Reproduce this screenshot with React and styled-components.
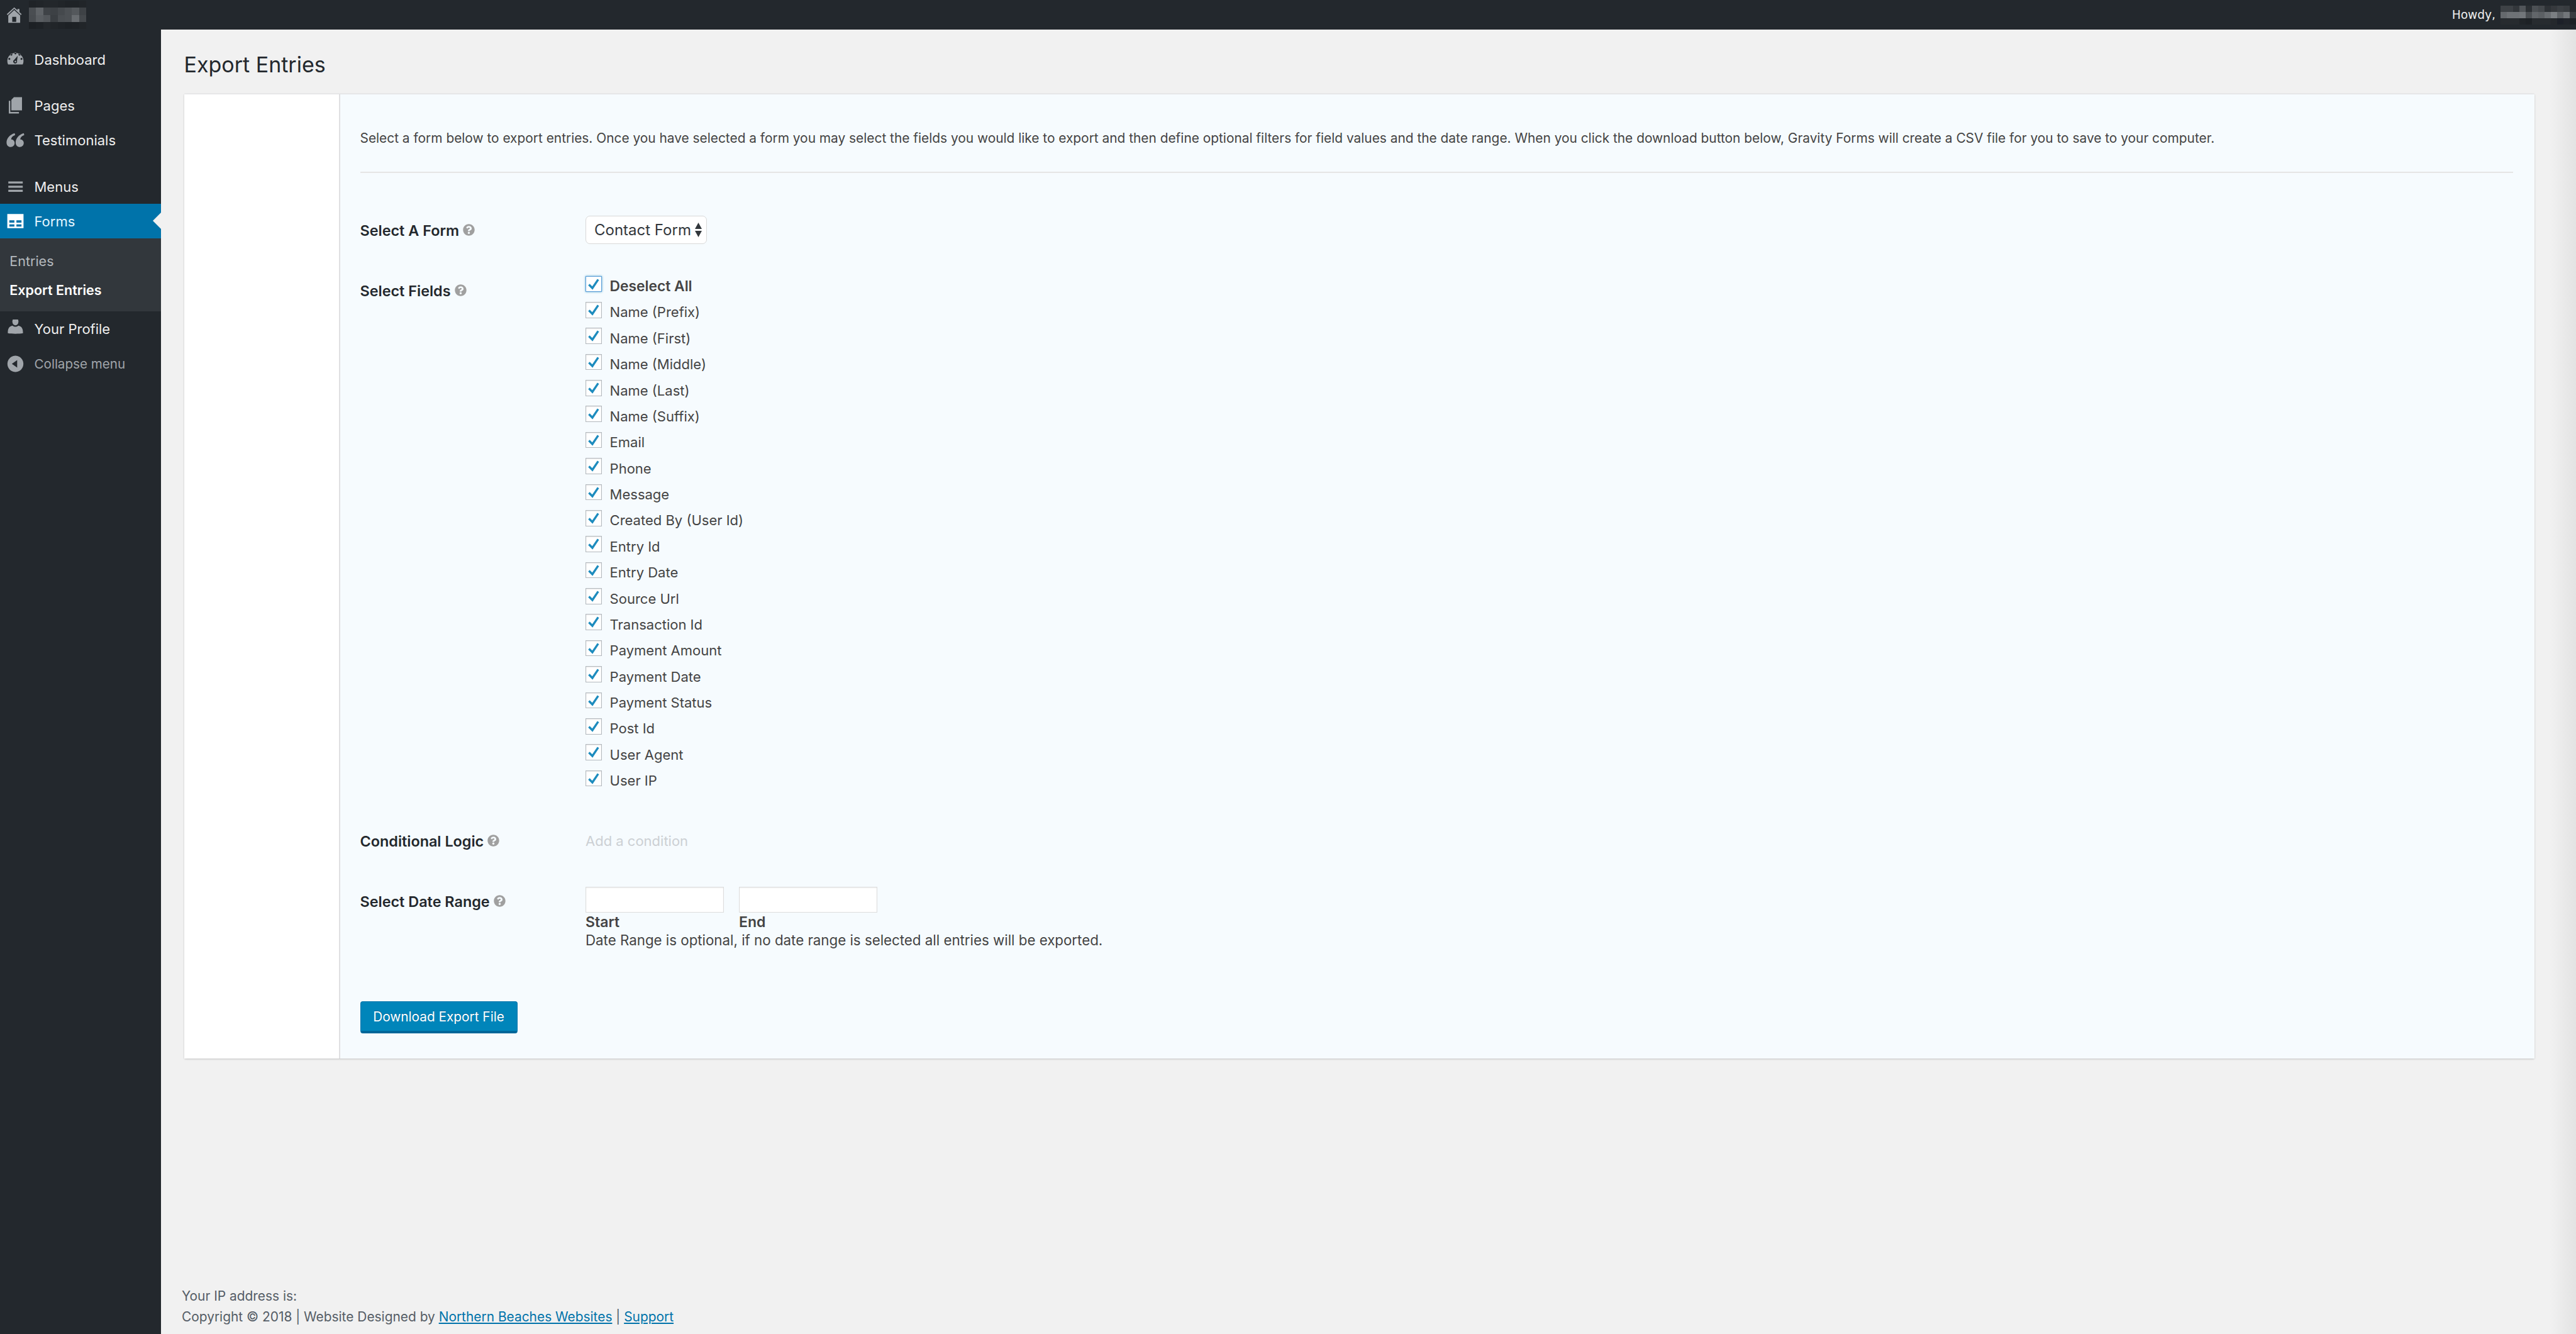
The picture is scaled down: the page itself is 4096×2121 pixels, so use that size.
import React from 'react'
import styled, { createGlobalStyle } from 'styled-components'
import { FaQuestionCircle } from 'react-icons/fa'

const GlobalStyle = createGlobalStyle`
  html, body {
    margin: 0;
    padding: 0;
    height: 100%;
    overflow: hidden;
    background: #f1f1f1;
  }
  #root {
    height: 100%;
  }
  * {
    box-sizing: border-box;
  }
`

const Page = styled.div`
  height: 100vh;
  display: flex;
  flex-direction: column;
  font-family: Inter, "Liberation Sans", sans-serif;
  font-size: 22px;
  color: #444;
`

const TopBar = styled.header`
  height: 47px;
  flex: none;
  background: #23282d;
  display: flex;
  align-items: center;
  justify-content: space-between;
`
const TopLeft = styled.div`
  display: flex;
  align-items: center;
  padding-left: 10px;
  gap: 9.6px;
`
const TopRight = styled.div`
  display: flex;
  align-items: center;
  gap: 8px;
`
const Howdy = styled.span`
  font-family: "DejaVu Sans", sans-serif;
  font-size: 18.6px;
  color: #eee;
`
const BlurSvg = styled.svg`
  display: block;
  shape-rendering: crispEdges;
`

const Body = styled.div`
  flex: 1;
  display: flex;
  min-height: 0;
`

const Sidebar = styled.nav`
  width: 256px;
  flex: none;
  background: #23282d;
  padding-top: 20px;
`
const MenuItem = styled.div`
  position: relative;
  height: 55px;
  margin-top: ${p => p.$gap || 0}px;
  display: flex;
  align-items: center;
  font-size: 22px;
  color: ${p => (p.$muted ? '#a0a5aa' : '#eee')};
  background: ${p => (p.$active ? '#0073aa' : 'transparent')};
  ${p => p.$active && 'color: #e4f6ff;'}
  ${p => p.$muted && 'font-size: 20.6px;'}

  &::after {
    content: ${p => (p.$active ? '""' : 'none')};
    position: absolute;
    right: 0;
    top: 14px;
    border-style: solid;
    border-width: 13px 13px 13px 0;
    border-color: transparent #f1f1f1 transparent transparent;
  }
`
const IconSlot = styled.span`
  width: 54.5px;
  flex: none;
  display: flex;
  justify-content: center;
  padding-right: 5.5px;
`
const MenuIcon = styled.svg`
  display: block;
  width: 29px;
  height: 29px;
  fill: ${p => (p.$active ? '#fff' : '#a0a5aa')};
`
const SubMenu = styled.div`
  height: 116px;
  background: #32373c;
  padding: 13px 0 0 15.3px;
  font-size: 21.5px;
`
const SubItem = styled.div`
  height: 46px;
  display: flex;
  align-items: center;
  color: ${p => (p.$current ? '#fff' : '#b4b9be')};
  font-weight: ${p => (p.$current ? 600 : 400)};
`

const Main = styled.main`
  flex: 1;
  min-width: 0;
  display: flex;
  flex-direction: column;
  background: linear-gradient(to right, #f1f1f1 calc(100% - 42px), #e3e3e3);
`
const Title = styled.h1`
  margin: 33px 0 23px 36.5px;
  font-size: 34px;
  line-height: 46px;
  font-weight: 400;
  color: #23282d;
`
const Panel = styled.section`
  margin: 0 66px 0 36.5px;
  height: 1534px;
  display: flex;
  background: #fff;
  border-top: 1.6px solid #e2e2e4;
  border-radius: 2px;
  box-shadow: 0 1px 3px rgba(0, 0, 0, 0.2);
`
const Aside = styled.div`
  width: 248px;
  flex: none;
  background: #fff;
  border-right: 2px solid #e0e0e2;
`
const Content = styled.div`
  flex: 1;
  min-width: 0;
  background: #f6fbfe;
  padding: 56px 34px 0 32px;
`
const Intro = styled.p`
  margin: 0;
  line-height: 28px;
  font-size: 20.86px;
  white-space: nowrap;
`
const Rule = styled.hr`
  margin: 39px 0 0;
  border: 0;
  height: 1.6px;
  background: #e5e5e5;
`
const FormRow = styled.div`
  display: grid;
  grid-template-columns: 358.5px 1fr;
  margin-top: ${p => p.$gap}px;
`
const RowLabel = styled.div`
  padding-top: 10px;
  display: flex;
  align-items: flex-start;
  gap: 6px;
  line-height: 28px;
  font-size: 23.4px;
  font-weight: 600;
  color: #23282d;
`
const Help = styled(FaQuestionCircle)`
  width: 19px;
  height: 19px;
  margin-top: 3px;
  color: #a0a0a0;
`
const SelectBox = styled.div`
  width: 193px;
  height: 45px;
  display: flex;
  align-items: center;
  justify-content: space-between;
  padding: 0 7px 0 13px;
  background: #fff;
  border: 1.6px solid #d8d8d8;
  border-radius: 7px;
  font-size: 24px;
  color: #32373c;
`
const Updown = styled.svg`
  width: 11px;
  height: 24px;
  fill: #32373c;
`
const FieldList = styled.div`
  display: flex;
  flex-direction: column;
`
const FieldRow = styled.div`
  height: 41.38px;
  display: flex;
  gap: 13px;
  color: #444;
  font-size: ${p => (p.$bold ? 22.8 : 22)}px;
  font-weight: ${p => (p.$bold ? 600 : 400)};
`
const CheckBox = styled.span`
  width: 25.6px;
  height: 25.6px;
  flex: none;
  background: #fff;
  border: 1.6px solid ${p => (p.$focus ? '#5b9dd9' : '#b4b9be')};
  box-shadow: ${p => (p.$focus ? '0 0 3px rgba(30, 140, 190, 0.8)' : 'inset 0 1px 2px rgba(0, 0, 0, 0.1)')};
`
const Check = styled.svg`
  display: block;
  width: 100%;
  height: 100%;
  fill: none;
  stroke: #1e8cbe;
  stroke-width: 4.6;
`
const FieldText = styled.span`
  line-height: 28px;
  padding-top: 2.5px;
`
const AddCondition = styled.div`
  padding-top: 9px;
  line-height: 28px;
  color: #ccd0d4;
`
const DateGrid = styled.div`
  display: grid;
  grid-template-columns: 220px 220px;
  column-gap: 24px;
`
const DateInput = styled.input`
  display: block;
  width: 100%;
  height: 41px;
  margin: 0;
  padding: 0;
  background: #fff;
  border: 1.6px solid #ddd;
  box-shadow: inset 0 1px 2px rgba(0, 0, 0, 0.07);
  outline: none;
`
const DateCaption = styled.div`
  margin-top: 1px;
  line-height: 28px;
  font-size: 23px;
  font-weight: 600;
`
const DateNote = styled.div`
  margin-top: 1.4px;
  line-height: 28px;
  font-size: 22.3px;
`
const DownloadButton = styled.button`
  display: block;
  width: 250px;
  height: 51px;
  margin-top: 83px;
  padding: 0;
  background: #0085ba;
  border: 1.6px solid #0073aa;
  border-bottom: 4px solid #006799;
  border-radius: 4px;
  color: #fff;
  font: inherit;
  font-size: 20.8px;
  text-shadow: 0 -1px 1px #006799;
`

const Footer = styled.footer`
  margin-top: auto;
  padding: 0 0 11px 33px;
  line-height: 32.5px;
  font-size: 20.9px;
  color: #555d66;
`
const FooterLink = styled.a`
  color: #0073aa;
  text-decoration: underline;
`

const leftBlur = [
  ['#1f2327', '#212529', '#23272b', '#23272b', '#212529', '#1f2327', '#1f2327', '#212529'],
  ['#4a4e52', '#5f6367', '#3f4347', '#3d4145', '#45494d', '#4c5054', '#54585c', '#3e4246'],
  ['#484c50', '#5a5e62', '#53575b', '#3a3e42', '#4a4e52', '#4c5054', '#686c70', '#44484c'],
  ['#1c2024', '#1e2226', '#23272b', '#212529', '#1f2327', '#1d2125', '#1e2226', '#212529'],
]
const rightBlur = [
  ['#3e4246', '#3e4246', '#33373b', '#515559', '#2c3034', '#4c5054', '#44484c', '#2e3236', '#36393d', '#3c4044', '#383c40', '#25292d'],
  ['#65696d', '#6e7276', '#6e7276', '#72767a', '#4b4f53', '#62666a', '#5c6064', '#696d71', '#7b7f83', '#5f6367', '#72767a', '#383c40'],
  ['#272b2f', '#272b2f', '#272b2f', '#202428', '#1d2125', '#272b2f', '#272b2f', '#272b2f', '#24282c', '#1c2028', '#20242a', '#1d2125'],
]

const PixelBlur = ({ rows, cell }) => (
  <BlurSvg
    width={rows[0].length * cell}
    height={rows.length * cell}
    viewBox={`0 0 ${rows[0].length} ${rows.length}`}
  >
    {rows.map((row, y) =>
      row.map((fill, x) => <rect key={`${x}-${y}`} x={x} y={y} width="1" height="1" fill={fill} />),
    )}
  </BlurSvg>
)

const HomeIcon = () => (
  <MenuIcon viewBox="12 10 33 33" style={{ width: 26, height: 26 }}>
    <path d="M13 24.500 28 11l6.500 5.800V14h4v6.400l4.500 4.100-1.700 1.900L28 13.800 14.700 26.400z" />
    <path fillRule="evenodd" d="M28 16.500 40 27.500V42H16V27.500zM24 30v10h8V30z" />
  </MenuIcon>
)
const GaugeIcon = () => (
  <MenuIcon viewBox="12 100 36 36">
    <path
      fillRule="evenodd"
      d="M15.600 128A16 16 0 1 1 44.400 128zM18 115a2 2 0 1 0 .01 0zM22 106.500a2 2 0 1 0 .01 0zM30 104a2 2 0 1 0 .01 0zM38 106.500a2 2 0 1 0 .01 0zM42 115a2 2 0 1 0 .01 0zM34.500 111l-7 8a3.800 3.800 0 1 0 5.600 2zM30 120.500a1.600 1.600 0 1 1-.01 0z"
    />
  </MenuIcon>
)
const PagesIcon = () => (
  <MenuIcon viewBox="11 188 36 36">
    <path d="M16 197h3v22h17v3H16z" />
    <path d="M26 190h16v26H21v-21z" />
  </MenuIcon>
)
const QuoteIcon = () => (
  <MenuIcon viewBox="10.500 254 36 36">
    <path d="M27 258.500C17 261.500 11 269 11 277c0 6 4 9 8 9 5 0 8-3.500 8-8 0-4.500-3.500-7-7-7 .3-3.500 3-7 8-8.500z" />
    <path d="M45 258.500c-10 3-16 10.500-16 18.500 0 6 4 9 8 9 5 0 8-3.500 8-8 0-4.500-3.500-7-7-7 .3-3.500 3-7 8-8.500z" />
  </MenuIcon>
)
const BarsIcon = () => (
  <MenuIcon viewBox="12 346 36 36">
    <path d="M16 354h28.500v4H16zM16 362.500h28.500v4H16zM16 370.500h28.500v4H16z" />
  </MenuIcon>
)
const TableIcon = () => (
  <MenuIcon $active viewBox="12 414 36 36">
    <path
      fillRule="evenodd"
      d="M14 418h32v28H14zM18 430.500v4.500h10v-4.500zM32 430.500v4.500h10v-4.500zM18 438.500v4.500h10v-4.500zM32 438.500v4.500h10v-4.500z"
    />
  </MenuIcon>
)
const UserIcon = () => (
  <MenuIcon viewBox="12 630 36 36">
    <ellipse cx="30" cy="634" rx="6" ry="7.500" />
    <path d="M15 657c0-9 2-13 9-15 3 3 9 3 12 0 7 2 9 6 9 15-8 1.500-22 1.500-30 0z" />
  </MenuIcon>
)
const CollapseIcon = () => (
  <MenuIcon viewBox="12 692 36 36">
    <path
      fillRule="evenodd"
      d="M30 694a15.800 16 0 1 0 .01 0zM33.500 702.500v15L23 710z"
    />
  </MenuIcon>
)

const fields = [
  'Name (Prefix)',
  'Name (First)',
  'Name (Middle)',
  'Name (Last)',
  'Name (Suffix)',
  'Email',
  'Phone',
  'Message',
  'Created By (User Id)',
  'Entry Id',
  'Entry Date',
  'Source Url',
  'Transaction Id',
  'Payment Amount',
  'Payment Date',
  'Payment Status',
  'Post Id',
  'User Agent',
  'User IP',
]

const Field = ({ label, bold, focus }) => (
  <FieldRow $bold={bold}>
    <CheckBox $focus={focus}>
      <Check viewBox="0 0 32 32">
        <polyline points="6,17 13.500,24.500 26,6" />
      </Check>
    </CheckBox>
    <FieldText>{label}</FieldText>
  </FieldRow>
)

const App = () => (
  <Page>
    <GlobalStyle />
    <TopBar>
      <TopLeft>
        <HomeIcon />
        <PixelBlur rows={leftBlur} cell={11.4} />
      </TopLeft>
      <TopRight>
        <Howdy>Howdy,</Howdy>
        <PixelBlur rows={rightBlur} cell={10} />
      </TopRight>
    </TopBar>
    <Body>
      <Sidebar>
        <MenuItem>
          <IconSlot><GaugeIcon /></IconSlot>Dashboard
        </MenuItem>
        <MenuItem $gap={18}>
          <IconSlot><PagesIcon /></IconSlot>Pages
        </MenuItem>
        <MenuItem>
          <IconSlot><QuoteIcon /></IconSlot>Testimonials
        </MenuItem>
        <MenuItem $gap={19}>
          <IconSlot><BarsIcon /></IconSlot>Menus
        </MenuItem>
        <MenuItem $active>
          <IconSlot><TableIcon /></IconSlot>Forms
        </MenuItem>
        <SubMenu>
          <SubItem>Entries</SubItem>
          <SubItem $current>Export Entries</SubItem>
        </SubMenu>
        <MenuItem>
          <IconSlot><UserIcon /></IconSlot>Your Profile
        </MenuItem>
        <MenuItem $muted $gap={1}>
          <IconSlot><CollapseIcon /></IconSlot>Collapse menu
        </MenuItem>
      </Sidebar>
      <Main>
        <Title>Export Entries</Title>
        <Panel>
          <Aside />
          <Content>
            <Intro>
              Select a form below to export entries. Once you have selected a form you may select the fields you would like to export and then define optional filters for field values and the date range. When you click the download button below, Gravity Forms will create a CSV file for you to save to your computer.
            </Intro>
            <Rule />
            <FormRow $gap={68}>
              <RowLabel>Select A Form <Help /></RowLabel>
              <SelectBox>
                Contact Form
                <Updown viewBox="0 0 11 24">
                  <path d="M5.500 1 11 11H0zM0 14h11L5.500 24z" />
                </Updown>
              </SelectBox>
            </FormRow>
            <FormRow $gap={51}>
              <RowLabel>Select Fields <Help /></RowLabel>
              <FieldList>
                <Field label="Deselect All" bold focus />
                {fields.map(f => <Field key={f} label={f} />)}
              </FieldList>
            </FormRow>
            <FormRow $gap={48}>
              <RowLabel>Conditional Logic <Help /></RowLabel>
              <AddCondition>Add a condition</AddCondition>
            </FormRow>
            <FormRow $gap={58}>
              <RowLabel>Select Date Range <Help /></RowLabel>
              <div>
                <DateGrid>
                  <DateInput type="text" />
                  <DateInput type="text" />
                  <DateCaption>Start</DateCaption>
                  <DateCaption>End</DateCaption>
                </DateGrid>
                <DateNote>Date Range is optional, if no date range is selected all entries will be exported.</DateNote>
              </div>
            </FormRow>
            <DownloadButton type="button">Download Export File</DownloadButton>
          </Content>
        </Panel>
        <Footer>
          Your IP address is:
          <br />
          Copyright © 2018 | Website Designed by <FooterLink href="#">Northern Beaches Websites</FooterLink> | <FooterLink href="#">Support</FooterLink>
        </Footer>
      </Main>
    </Body>
  </Page>
)

export default App
